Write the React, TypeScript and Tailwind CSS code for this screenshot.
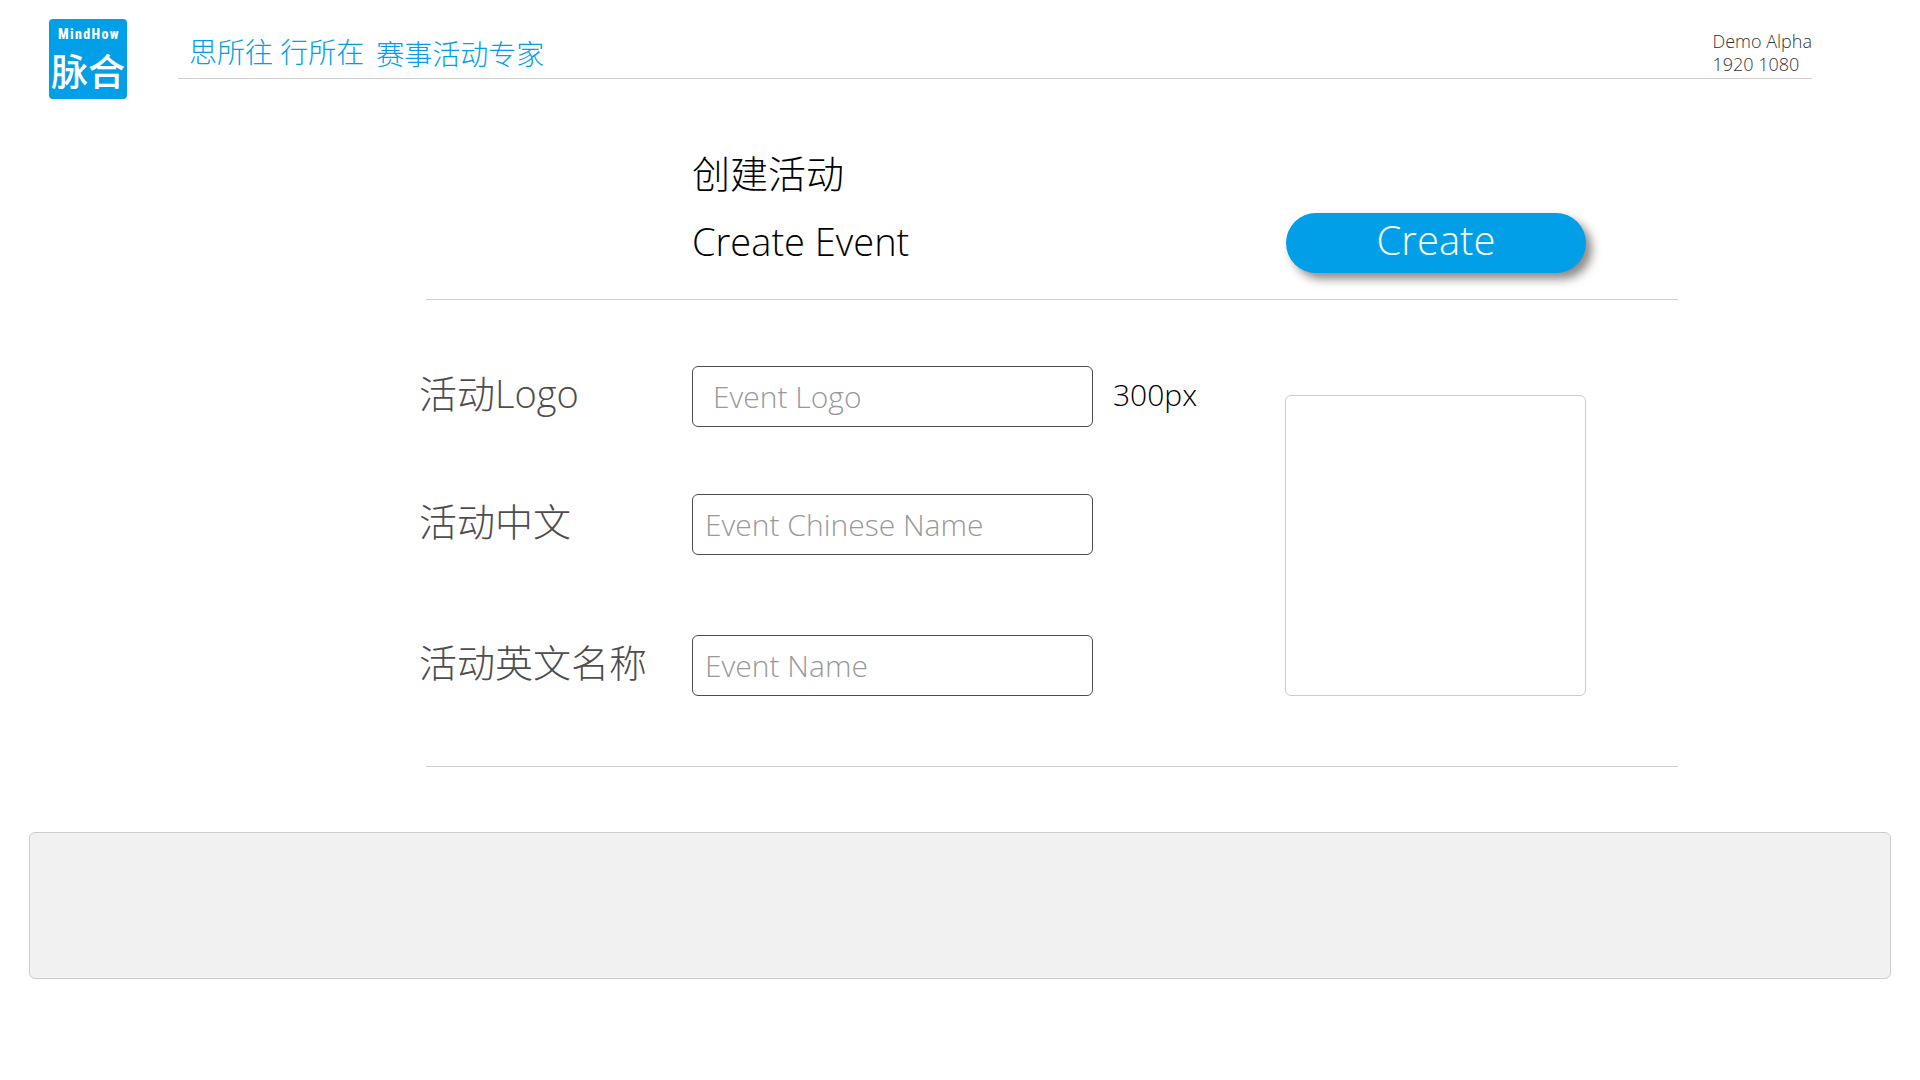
const fields = [
  {
    id: "event-logo",
    label: "活动Logo",
    placeholder: "Event Logo",
    note: "300px",
    row: "",
    input: "px-5",
  },
  {
    id: "event-name-zh",
    label: "活动中文",
    placeholder: "Event Chinese Name",
    row: "",
    input: "px-3",
  },
  {
    id: "event-name",
    label: "活动英文名称",
    placeholder: "Event Name",
    row: "mt-[13px]",
    input: "px-3",
  },
];

function Logo() {
  return (
    <a href="/" className="h-20 w-[78px] shrink-0 overflow-hidden rounded-sm bg-[#009fe8]">
      <svg viewBox="0 0 78 80" className="size-full" aria-hidden="true">
        <text
          x="40"
          y="20"
          fontSize="14"
          fontWeight="800"
          textAnchor="middle"
          className="fill-white font-['Roboto_Condensed','Roboto',sans-serif] tracking-widest"
        >
          MindHow
        </text>
        <text
          x="39"
          y="67"
          fontSize="37"
          fontWeight="500"
          textAnchor="middle"
          className="fill-white font-['Noto_Sans_CJK_SC',sans-serif]"
        >
          脉合
        </text>
      </svg>
    </a>
  );
}

function Header() {
  return (
    <header className="flex items-start gap-[51px] pt-[19px] pr-[108px] pl-[49px]">
      <Logo />
      <div className="flex h-[60px] flex-1 items-end justify-between border-b border-[#d0d0d0]">
        <p className="flex items-start gap-3 pb-1.5 pl-[11px] text-[28px] leading-9 text-[#009fe8]">
          <span>思所往 行所在</span>
          <span className="pt-0.5">赛事活动专家</span>
        </p>
        <p className="pb-0.5 text-lg leading-[23px] text-[#333]">
          Demo Alpha
          <br />
          1920 1080
        </p>
      </div>
    </header>
  );
}

export default function App() {
  return (
    <div className="min-h-screen bg-white font-['Open_Sans','Noto_Sans_CJK_SC',sans-serif] font-light">
      <Header />

      <main>
        <form className="pt-[50px] pr-[242px] pl-[419px]">
          <div className="flex items-end justify-between pr-[92px] pl-[273px]">
            <h1 className="pb-2 text-[38px] leading-12 text-black">
              创建活动
              <span className="block pt-5">Create Event</span>
            </h1>
            <button
              type="button"
              className="h-[60px] w-[300px] rounded-full bg-[#009fe8] pb-1.5 text-[40px] leading-none text-white shadow-[6px_6px_10px_rgba(35,24,21,0.5)]"
            >
              Create
            </button>
          </div>

          <hr className="mt-[26px] ml-[7px] border-[#d0d0d0]" />

          <div className="flex items-end justify-between pt-[66px] pr-[92px] pb-[70px]">
            <div className="flex flex-col gap-[67px]">
              {fields.map((field) => (
                <div key={field.id} className={`flex items-center ${field.row}`}>
                  <label
                    htmlFor={field.id}
                    className="w-[273px] pb-2 text-[38px] leading-none text-[#4d4d4d]"
                  >
                    {field.label}
                  </label>
                  <input
                    id={field.id}
                    type="text"
                    placeholder={field.placeholder}
                    className={`h-[61px] w-[401px] rounded-md border border-[#4d4d4d] text-[30px] text-[#4d4d4d] placeholder:text-[#999] ${field.input}`}
                  />
                  {field.note && (
                    <span className="pb-1 pl-5 text-[30px] leading-none text-black">
                      {field.note}
                    </span>
                  )}
                </div>
              ))}
            </div>
            <div className="size-[301px] rounded-md border border-[#ccc]" />
          </div>

          <hr className="ml-[7px] border-[#d0d0d0]" />
        </form>

        <section className="mx-[29px] mt-[65px] h-[147px] rounded-md border border-[#ccc] bg-[#f1f1f1]" />
      </main>
    </div>
  );
}
